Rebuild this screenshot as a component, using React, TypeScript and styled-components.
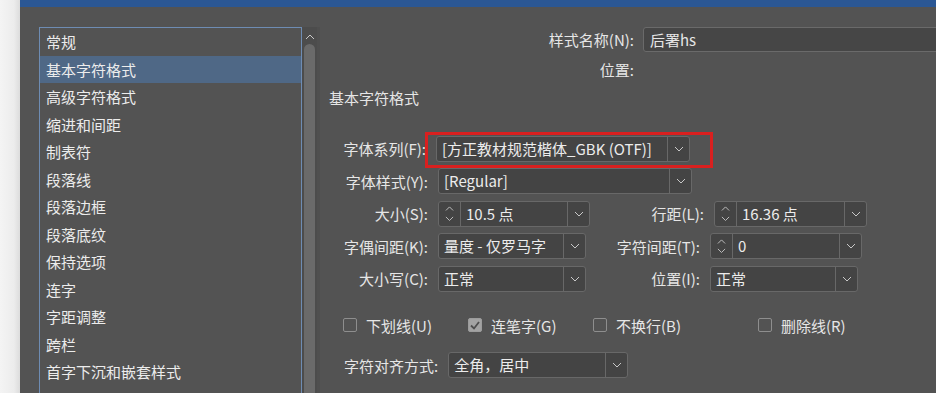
import styled, { createGlobalStyle } from "styled-components";

const GlobalStyle = createGlobalStyle`
    html, body {
        margin: 0;
        padding: 0;
        overflow: hidden;
    }
    body {
        font-family: "Noto Sans CJK SC", "Noto Sans", sans-serif;
        font-size: 15px;
        color: #e6e6e6;
        background: #535353;
    }
`;

const categories = [
    "常规",
    "基本字符格式",
    "高级字符格式",
    "缩进和间距",
    "制表符",
    "段落线",
    "段落边框",
    "段落底纹",
    "保持选项",
    "连字",
    "字距调整",
    "跨栏",
    "首字下沉和嵌套样式",
];

function Chevron({ up = false, size = 10 }: { up?: boolean; size?: number }) {
    return (
        <svg width={size} height={size * 0.6} viewBox="0 0 10 6">
            <polyline
                points={up ? "1,5 5,1 9,5" : "1,1 5,5 9,1"}
                fill="none"
                stroke="#c8c8c8"
                strokeWidth="1"
            />
        </svg>
    );
}

function Combo({ value, width, spin = false }: { value: string; width: number; spin?: boolean }) {
    return (
        <ComboBox $w={width}>
            {spin && (
                <SpinPart>
                    <Chevron up size={9} />
                    <Chevron size={9} />
                </SpinPart>
            )}
            <ComboValue>{value}</ComboValue>
            <ArrowPart>
                <Chevron />
            </ArrowPart>
        </ComboBox>
    );
}

function Check({ label, checked = false, width }: { label: string; checked?: boolean; width: number }) {
    return (
        <CheckItem $w={width}>
            <Box $checked={checked}>
                {checked && (
                    <svg width="10" height="9" viewBox="0 0 10 9">
                        <polyline points="1,4.5 4,7.5 9,1" fill="none" stroke="#4e4e4e" strokeWidth="1.8" />
                    </svg>
                )}
            </Box>
            {label}
        </CheckItem>
    );
}

export default function App() {
    return (
        <Page>
            <GlobalStyle />
            <LeftEdge />
            <Dialog>
                <ListColumn>
                    <CategoryList>
                        {categories.map((c, i) => (
                            <CategoryItem key={c} $selected={i === 1}>
                                {c}
                            </CategoryItem>
                        ))}
                    </CategoryList>
                    <ScrollTrack>
                        <Chevron up size={10} />
                        <ScrollThumb />
                    </ScrollTrack>
                </ListColumn>
                <Form>
                    <TopRow>
                        <Label $w={314}>样式名称(N):</Label>
                        <TextInput>后署hs</TextInput>
                    </TopRow>
                    <TopRow $mt={5}>
                        <Label $w={314}>位置:</Label>
                    </TopRow>
                    <SectionTitle>基本字符格式</SectionTitle>
                    <FieldGroup>
                        <FieldRow>
                            <Label $w={106}>字体系列(F):</Label>
                            <Highlighted>
                                <Combo value="[方正教材规范楷体_GBK (OTF)]" width={254} />
                                <RedBox />
                            </Highlighted>
                        </FieldRow>
                        <FieldRow>
                            <Label $w={108}>字体样式(Y):</Label>
                            <Combo value="[Regular]" width={254} />
                        </FieldRow>
                        <FieldRow>
                            <Label $w={108}>大小(S):</Label>
                            <Combo value="10.5 点" width={152} spin />
                            <Label $w={104}>行距(L):</Label>
                            <Combo value="16.36 点" width={153} spin />
                        </FieldRow>
                        <FieldRow>
                            <Label $w={108}>字偶间距(K):</Label>
                            <Combo value="量度 - 仅罗马字" width={148} />
                            <Label $w={104}>字符间距(T):</Label>
                            <Combo value="0" width={152} spin />
                        </FieldRow>
                        <FieldRow>
                            <Label $w={108}>大小写(C):</Label>
                            <Combo value="正常" width={148} />
                            <Label $w={104}>位置(I):</Label>
                            <Combo value="正常" width={148} />
                        </FieldRow>
                    </FieldGroup>
                    <CheckRow>
                        <Check label="下划线(U)" width={125} />
                        <Check label="连笔字(G)" width={125} checked />
                        <Check label="不换行(B)" width={165} />
                        <Check label="删除线(R)" width={120} />
                    </CheckRow>
                    <AlignRow>
                        <AlignLabel>字符对齐方式:</AlignLabel>
                        <Combo value="全角，居中" width={180} />
                    </AlignRow>
                </Form>
            </Dialog>
        </Page>
    );
}

const Page = styled.div`
    display: flex;
    width: 936px;
    height: 393px;
    overflow: hidden;
`;

const LeftEdge = styled.div`
    width: 20px;
    flex-shrink: 0;
    background: linear-gradient(to right, #f4f4f4 0%, #ececec 70%, #dcdcdc 100%);
`;

const Dialog = styled.div`
    flex: 1;
    display: flex;
    background: #535353;
    border-top: 7px solid #2b5794;
    padding: 20px 0 0 19px;
    min-width: 0;
`;

const ListColumn = styled.div`
    display: flex;
    flex-shrink: 0;
    height: 400px;
`;

const CategoryList = styled.ul`
    list-style: none;
    margin: 0;
    padding: 0;
    width: 261px;
    border: 1px solid #6e8cb3;
    border-bottom: none;
    background: #535353;
`;

const CategoryItem = styled.li<{ $selected?: boolean }>`
    height: 27.5px;
    line-height: 27.5px;
    padding-left: 6px;
    white-space: nowrap;
    color: #ececec;
    background: ${({ $selected }) => ($selected ? "#4f6886" : "transparent")};
`;

const ScrollTrack = styled.div`
    width: 15px;
    background: #4c4c4c;
    display: flex;
    flex-direction: column;
    align-items: center;
    padding-top: 7px;
    gap: 4px;
    border-right: 3px solid #4f4f4f;
`;

const ScrollThumb = styled.div`
    width: 11px;
    flex: 1;
    border-radius: 6px 6px 0 0;
    background: #6a6a6a;
`;

const Form = styled.div`
    flex: 1;
    display: flex;
    flex-direction: column;
    min-width: 0;
`;

const TopRow = styled.div<{ $mt?: number }>`
    display: flex;
    align-items: center;
    gap: 9px;
    height: 25px;
    margin-top: ${({ $mt }) => $mt ?? 0}px;
`;

const Label = styled.div<{ $w: number }>`
    width: ${({ $w }) => $w}px;
    flex-shrink: 0;
    text-align: right;
    white-space: nowrap;
    color: #e6e6e6;
`;

const TextInput = styled.div`
    width: 320px;
    flex-shrink: 0;
    height: 25px;
    box-sizing: border-box;
    background: #464646;
    border: 1px solid #6a6a6a;
    border-radius: 3px;
    padding-left: 6px;
    line-height: 23px;
    white-space: nowrap;
`;

const SectionTitle = styled.div`
    height: 25px;
    line-height: 25px;
    margin-top: 3px;
    padding-left: 9px;
`;

const FieldGroup = styled.div`
    display: flex;
    flex-direction: column;
    gap: 6.5px;
    margin-top: 25.5px;
`;

const FieldRow = styled.div`
    display: flex;
    align-items: center;
    gap: 10px;
    height: 26px;
`;

const Highlighted = styled.div`
    position: relative;
    display: flex;
`;

const RedBox = styled.div`
    position: absolute;
    left: -11px;
    right: -23px;
    top: -4px;
    bottom: -6px;
    border: 3px solid #d9201f;
    pointer-events: none;
`;

const ComboBox = styled.div<{ $w: number }>`
    width: ${({ $w }) => $w}px;
    height: 26px;
    box-sizing: border-box;
    display: flex;
    flex-shrink: 0;
    background: #444444;
    border: 1px solid #686868;
    border-radius: 3px;
`;

const SpinPart = styled.div`
    width: 21px;
    display: flex;
    flex-direction: column;
    align-items: center;
    justify-content: center;
    gap: 4px;
    border-right: 1px solid #686868;
`;

const ComboValue = styled.div`
    flex: 1;
    padding-left: 5px;
    line-height: 24px;
    white-space: nowrap;
    overflow: hidden;
    color: #ececec;
`;

const ArrowPart = styled.div`
    width: 21px;
    display: flex;
    align-items: center;
    justify-content: center;
    border-left: 1px solid #686868;
`;

const CheckRow = styled.div`
    display: flex;
    align-items: center;
    height: 26px;
    margin-top: 20.5px;
    padding-left: 23px;
`;

const CheckItem = styled.div<{ $w: number }>`
    width: ${({ $w }) => $w}px;
    flex-shrink: 0;
    display: flex;
    align-items: center;
    gap: 9px;
    white-space: nowrap;
`;

const Box = styled.div<{ $checked?: boolean }>`
    width: 14px;
    height: 14px;
    box-sizing: border-box;
    border: 1px solid ${({ $checked }) => ($checked ? "#9c9c9c" : "#8e8e8e")};
    border-radius: 2px;
    background: ${({ $checked }) => ($checked ? "#a3a3a3" : "transparent")};
    display: flex;
    align-items: center;
    justify-content: center;
`;

const AlignRow = styled.div`
    display: flex;
    align-items: center;
    gap: 10px;
    height: 26px;
    margin-top: 14px;
    padding-left: 24px;
`;

const AlignLabel = styled.div`
    white-space: nowrap;
`;
